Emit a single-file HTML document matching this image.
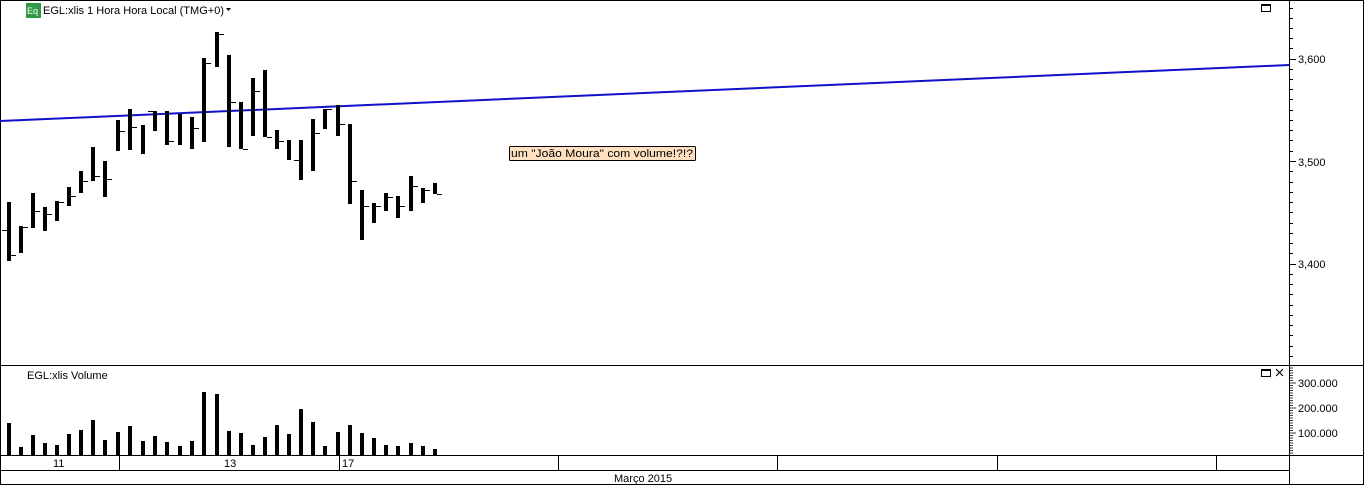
<!DOCTYPE html>
<html><head><meta charset="utf-8"><style>
html,body{margin:0;padding:0;background:#fff;}
svg{display:block;font-family:"Liberation Sans",Arial,sans-serif;}
</style></head><body>
<svg width="1364" height="485" viewBox="0 0 1364 485" xmlns="http://www.w3.org/2000/svg">
<rect x="0.5" y="0.5" width="1363" height="484" fill="#fff" stroke="#000"/>
<line x1="1289.5" y1="0" x2="1289.5" y2="485" stroke="#000"/>
<line x1="0" y1="365.5" x2="1364" y2="365.5" stroke="#000"/>
<line x1="0" y1="455.5" x2="1289" y2="455.5" stroke="#000"/>
<line x1="0" y1="470.5" x2="1289" y2="470.5" stroke="#000"/>
<line x1="1289" y1="455.5" x2="1364" y2="455.5" stroke="#000"/>
<g stroke="#000">
<line x1="119.5" y1="455" x2="119.5" y2="470"/>
<line x1="339.5" y1="455" x2="339.5" y2="470"/>
<line x1="558.5" y1="455" x2="558.5" y2="470"/>
<line x1="777.5" y1="455" x2="777.5" y2="470"/>
<line x1="997.5" y1="455" x2="997.5" y2="470"/>
<line x1="1216.5" y1="455" x2="1216.5" y2="470"/>
</g>
<g font-size="11" fill="#000">
<text x="53" y="467">11</text>
<text x="224" y="467">13</text>
<text x="342" y="467">17</text>
<text x="614" y="482">Março 2015</text>
</g>
<rect x="26" y="3" width="15" height="15" fill="#2e9a48"/>
<text x="27" y="14" font-size="9" fill="#fff">Eq</text>
<text x="43" y="14" font-size="11" fill="#000" textLength="181">EGL:xlis 1 Hora Hora Local (TMG+0)</text>
<path d="M226 8 h5 l-2.5 3z" fill="#000"/>
<rect x="1261.5" y="4.5" width="9" height="7" fill="none" stroke="#000"/>
<line x1="1261" y1="5.5" x2="1271" y2="5.5" stroke="#000"/>
<text x="27" y="379" font-size="11" fill="#000">EGL:xlis Volume</text>
<rect x="1261.5" y="369.5" width="9" height="7" fill="none" stroke="#000"/>
<line x1="1261" y1="370.5" x2="1271" y2="370.5" stroke="#000"/>
<path d="M1276 369 l7 7 M1283 369 l-7 7" stroke="#000" stroke-width="1.2"/>
<g stroke="#000">
<line x1="1290" y1="8.5" x2="1293" y2="8.5"/><line x1="1290" y1="18.5" x2="1293" y2="18.5"/><line x1="1290" y1="28.5" x2="1293" y2="28.5"/><line x1="1290" y1="38.5" x2="1293" y2="38.5"/><line x1="1290" y1="48.5" x2="1293" y2="48.5"/><line x1="1290" y1="59.5" x2="1296" y2="59.5"/><line x1="1290" y1="69.5" x2="1293" y2="69.5"/><line x1="1290" y1="79.5" x2="1293" y2="79.5"/><line x1="1290" y1="89.5" x2="1293" y2="89.5"/><line x1="1290" y1="99.5" x2="1293" y2="99.5"/><line x1="1290" y1="110.5" x2="1293" y2="110.5"/><line x1="1290" y1="120.5" x2="1293" y2="120.5"/><line x1="1290" y1="130.5" x2="1293" y2="130.5"/><line x1="1290" y1="140.5" x2="1293" y2="140.5"/><line x1="1290" y1="151.5" x2="1293" y2="151.5"/><line x1="1290" y1="161.5" x2="1296" y2="161.5"/><line x1="1290" y1="171.5" x2="1293" y2="171.5"/><line x1="1290" y1="182.5" x2="1293" y2="182.5"/><line x1="1290" y1="192.5" x2="1293" y2="192.5"/><line x1="1290" y1="202.5" x2="1293" y2="202.5"/><line x1="1290" y1="212.5" x2="1293" y2="212.5"/><line x1="1290" y1="223.5" x2="1293" y2="223.5"/><line x1="1290" y1="233.5" x2="1293" y2="233.5"/><line x1="1290" y1="243.5" x2="1293" y2="243.5"/><line x1="1290" y1="253.5" x2="1293" y2="253.5"/><line x1="1290" y1="264.5" x2="1296" y2="264.5"/><line x1="1290" y1="274.5" x2="1293" y2="274.5"/><line x1="1290" y1="284.5" x2="1293" y2="284.5"/><line x1="1290" y1="294.5" x2="1293" y2="294.5"/><line x1="1290" y1="305.5" x2="1293" y2="305.5"/><line x1="1290" y1="315.5" x2="1293" y2="315.5"/><line x1="1290" y1="325.5" x2="1293" y2="325.5"/><line x1="1290" y1="335.5" x2="1293" y2="335.5"/><line x1="1290" y1="346.5" x2="1293" y2="346.5"/><line x1="1290" y1="356.5" x2="1293" y2="356.5"/>
</g>
<path d="M1290 368 h3 M1290 370.5 h3 M1290 373 h3 M1290 375.5 h3 M1290 378 h3 M1290 380.5 h3 M1290 383 h6 M1290 385.5 h3 M1290 388 h3 M1290 390.5 h3 M1290 393 h3 M1290 395.5 h3 M1290 398 h3 M1290 400.5 h3 M1290 403 h3 M1290 405.5 h3 M1290 408 h6 M1290 410.5 h3 M1290 413 h3 M1290 415.5 h3 M1290 418 h3 M1290 420.5 h3 M1290 423 h3 M1290 425.5 h3 M1290 428 h3 M1290 430.5 h3 M1290 433 h6 M1290 435.5 h3 M1290 438 h3 M1290 440.5 h3 M1290 443 h3 M1290 445.5 h3 M1290 448 h3 M1290 450.5 h3 M1290 453 h3" stroke="#000" stroke-width="0.8"/>
<g font-size="11" fill="#000">
<text x="1298" y="63">3,600</text>
<text x="1298" y="166">3,500</text>
<text x="1298" y="268">3,400</text>
<text x="1298" y="387">300.000</text>
<text x="1298" y="412">200.000</text>
<text x="1298" y="437">100.000</text>
</g>
<line x1="0" y1="121" x2="1289" y2="65" stroke="#1010c8" stroke-width="2"/>
<rect x="509.5" y="146.5" width="186" height="14" fill="#ffe0c0" stroke="#000" rx="1"/>
<text x="511" y="157" font-size="11" fill="#000" textLength="182" lengthAdjust="spacingAndGlyphs">um "João Moura" com volume!?!?</text>
<g fill="#000" id="bars"></g>
<g fill="#000" id="vols"></g>
<script>
var B=[[9,202,261,230,255],[21,226,253,null,227],[33,193,228,null,211],[45,207,231,null,214],[57,201,221,null,202],[69,187,206,null,196],[81,171,193,null,181],[93,147,181,null,176],[105,161,197,null,179],[118,120,151,null,131],[130,109,150,null,127],[143,125,154,null,null],[155,111,131,111,null],[167,111,145,null,141],[180,114,145,null,null],[192,117,149,null,128],[204,58,142,null,63],[217,32,67,null,34],[229,55,147,null,102],[241,102,149,null,149],[253,78,136,null,91],[265,70,137,null,137],[277,130,149,null,141],[289,140,160,null,null],[301,140,180,160,null],[313,119,171,null,133],[325,109,129,null,109],[338,105,136,null,124],[350,124,204,null,181],[362,190,240,null,206],[374,203,223,null,206],[386,193,211,null,197],[398,196,218,null,206],[411,176,211,null,186],[423,188,203,null,190],[435,183,194,null,194]];
var V=[423,447,435,443,445,434,430,420,440,432,426,441,436,442,446,441,392,394,431,433,445,437,425,434,409,422,446,432,425,433,438,445,446,443,446,449];
var ns="http://www.w3.org/2000/svg",g=document.getElementById('bars'),gv=document.getElementById('vols');
function r(p,x,y,w,h){var e=document.createElementNS(ns,'rect');e.setAttribute('x',x);e.setAttribute('y',y);e.setAttribute('width',w);e.setAttribute('height',h);p.appendChild(e);}
B.forEach(function(b,i){var x=b[0]-2;r(g,x,b[1],4,b[2]-b[1]);if(b[3]!==null)r(g,x-5,b[3],5,1);if(b[4]!==null)r(g,x+4,b[4],5,1);r(gv,x,V[i],4,455-V[i]);});
</script>
</svg>
</body></html>
